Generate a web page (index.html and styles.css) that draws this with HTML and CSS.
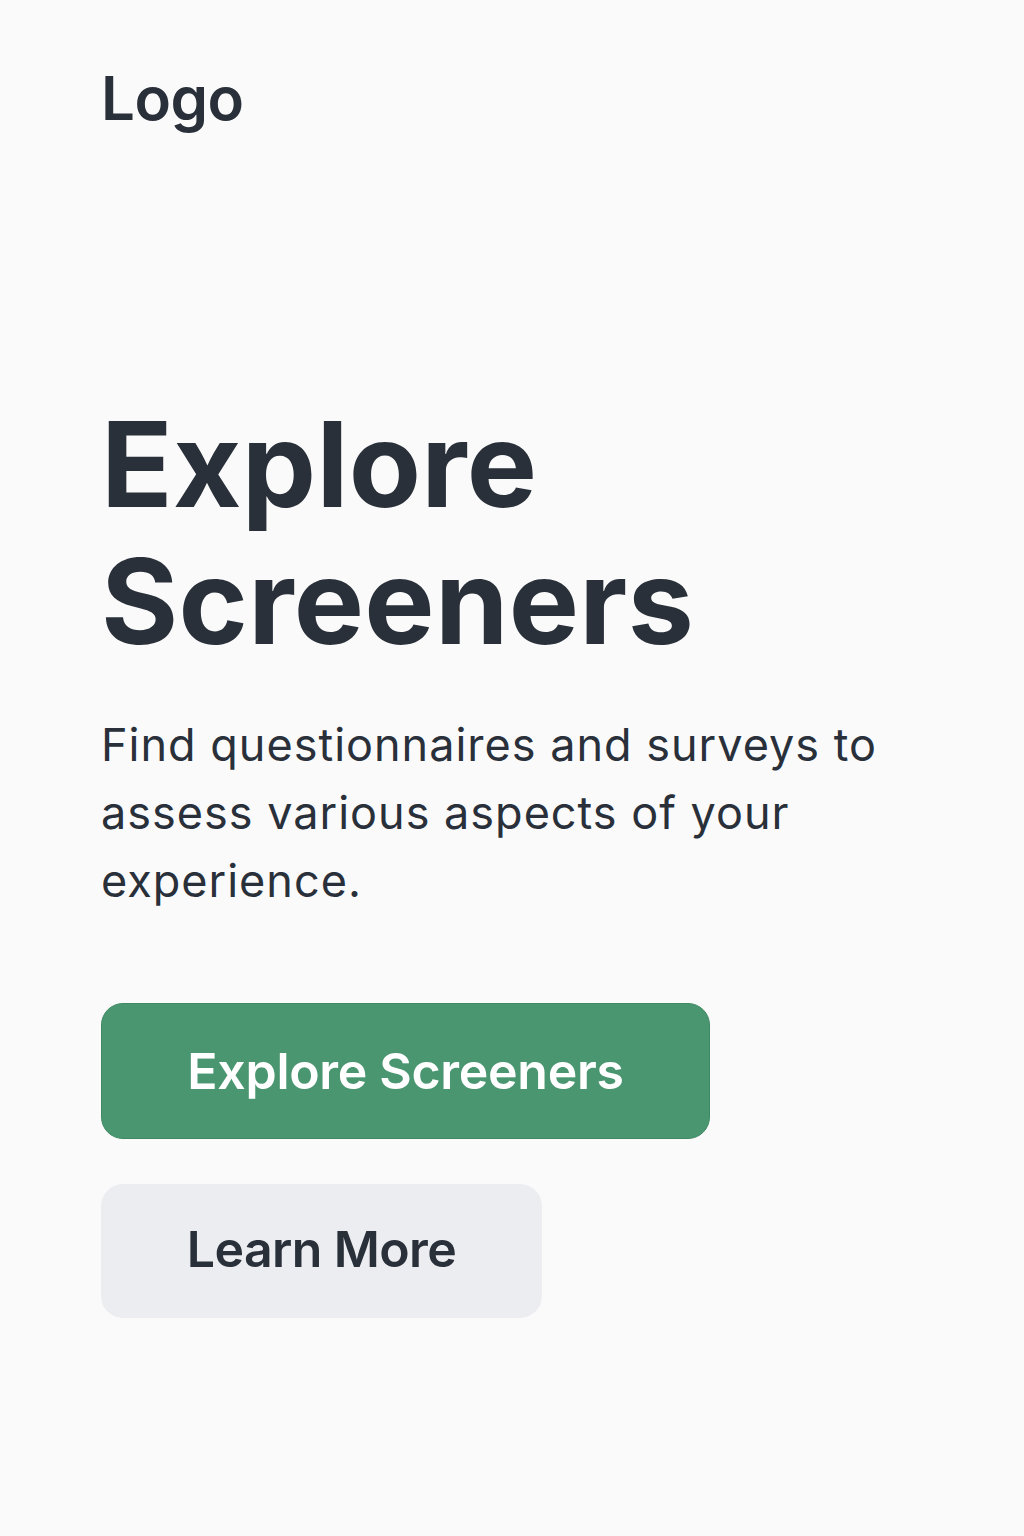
FILE: index.html
```html
<!DOCTYPE html>
<html lang="en">
<head>
<meta charset="utf-8">
<title>Explore Screeners</title>
<link rel="stylesheet" href="styles.css">
</head>
<body>
<div class="page">
  <header class="header">
    <div class="logo">Logo</div>
  </header>
  <main class="hero">
    <h1 class="title">Explore<br>Screeners</h1>
    <p class="lead">Find questionnaires and surveys to assess various aspects of your experience.</p>
    <div class="actions">
      <a class="btn btn-primary" href="#">Explore Screeners</a>
      <a class="btn btn-secondary" href="#">Learn More</a>
    </div>
  </main>
</div>
</body>
</html>
```
FILE: styles.css
```css
html, body {
  margin: 0;
  padding: 0;
}
body {
  background: #fafafa;
  color: #29303a;
  font-family: Inter, "Noto Sans", sans-serif;
  width: 1024px;
  min-height: 1536px;
}
.page {
  padding: 62px 102px 0 101px;
  display: flex;
  flex-direction: column;
}
.logo {
  font-size: 60px;
  font-weight: 600;
  line-height: 72px;
  letter-spacing: -0.5px;
}
.hero {
  margin-top: 262px;
  display: flex;
  flex-direction: column;
}
.title {
  margin: 0;
  font-size: 118px;
  font-weight: 700;
  line-height: 137px;
  letter-spacing: 0.3px;
}
.lead {
  margin: 41px 0 0 0;
  font-size: 45px;
  font-weight: 400;
  line-height: 68px;
  letter-spacing: 1px;
  max-width: 820px;
}
.actions {
  margin-top: 88px;
  display: flex;
  flex-direction: column;
  align-items: flex-start;
  gap: 45px;
}
.btn {
  display: flex;
  align-items: center;
  justify-content: center;
  text-decoration: none;
  border-radius: 22px;
  box-sizing: border-box;
  font-weight: 600;
}
.btn-primary {
  width: 609px;
  height: 136px;
  background: #4a9670;
  border: 1px solid #3f8a63;
  color: #ffffff;
  font-size: 50px;
  letter-spacing: -0.3px;
}
.btn-secondary {
  width: 441px;
  height: 134px;
  background: #ecedf0;
  color: #29303a;
  font-size: 50px;
  font-weight: 600;
  letter-spacing: -0.6px;
  padding-bottom: 4px;
}
```
